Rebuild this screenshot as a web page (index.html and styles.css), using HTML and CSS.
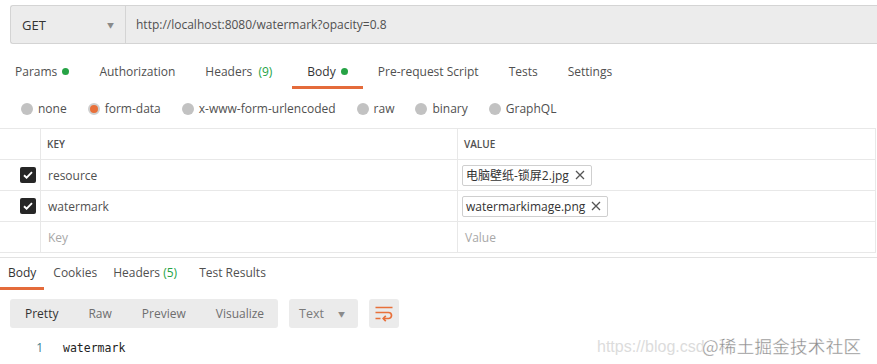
FILE: index.html
```html
<html>
<head>
	<title>Postman - watermark</title>
	<link rel="stylesheet" href="styles.css">
</head>
<body>
	<div class="url-bar">
		<div class="method">
			<span>GET</span>
			<span class="caret">&#9660;</span>
		</div>
		<div class="url">http://localhost:8080/watermark?opacity=0.8</div>
	</div>

	<div class="tabs req-tabs">
		<div class="tab">Params <span class="dot"></span></div>
		<div class="tab">Authorization</div>
		<div class="tab wide">Headers <span class="count">(9)</span></div>
		<div class="tab active">Body <span class="dot"></span></div>
		<div class="tab">Pre-request Script</div>
		<div class="tab">Tests</div>
		<div class="tab">Settings</div>
	</div>

	<div class="body-types">
		<label class="radio"><span class="circle"></span>none</label>
		<label class="radio"><span class="circle on"></span>form-data</label>
		<label class="radio"><span class="circle"></span>x-www-form-urlencoded</label>
		<label class="radio"><span class="circle"></span>raw</label>
		<label class="radio"><span class="circle"></span>binary</label>
		<label class="radio"><span class="circle"></span>GraphQL</label>
	</div>

	<div class="kv-table">
		<div class="kv-row head">
			<div class="cell check"></div>
			<div class="cell">KEY</div>
			<div class="cell">VALUE</div>
		</div>
		<div class="kv-row">
			<div class="cell check"><span class="box"><svg width="10" height="8" viewBox="0 0 10 8"><path d="M1 4.2l2.6 2.5L9 1.2" stroke="#fff" stroke-width="1.9" fill="none"/></svg></span></div>
			<div class="cell">resource</div>
			<div class="cell"><span class="file">电脑壁纸-锁屏2.jpg <svg class="x" width="10" height="10" viewBox="0 0 10 10"><path d="M1 1l8 8M9 1l-8 8" stroke="#555" stroke-width="1.3"/></svg></span></div>
		</div>
		<div class="kv-row">
			<div class="cell check"><span class="box"><svg width="10" height="8" viewBox="0 0 10 8"><path d="M1 4.2l2.6 2.5L9 1.2" stroke="#fff" stroke-width="1.9" fill="none"/></svg></span></div>
			<div class="cell">watermark</div>
			<div class="cell"><span class="file">watermarkimage.png <svg class="x" width="10" height="10" viewBox="0 0 10 10"><path d="M1 1l8 8M9 1l-8 8" stroke="#555" stroke-width="1.3"/></svg></span></div>
		</div>
		<div class="kv-row">
			<div class="cell check"></div>
			<div class="cell placeholder">Key</div>
			<div class="cell placeholder">Value</div>
		</div>
	</div>

	<div class="response">
		<div class="tabs res-tabs">
			<div class="tab active">Body</div>
			<div class="tab">Cookies</div>
			<div class="tab">Headers <span class="count">(5)</span></div>
			<div class="tab">Test Results</div>
		</div>

		<div class="toolbar">
			<div class="segment">
				<span class="seg-btn current">Pretty</span>
				<span class="seg-btn">Raw</span>
				<span class="seg-btn">Preview</span>
				<span class="seg-btn">Visualize</span>
			</div>
			<div class="format">Text <span class="caret">&#9660;</span></div>
			<div class="wrap-btn">
				<svg width="18" height="16" viewBox="0 0 18 16">
					<path d="M0.5 1.5h17M0.5 6.5h13a3 3 0 0 1 0 6H8.5M0.5 12.5h5" stroke="#e8703a" stroke-width="1.7" fill="none"/>
					<path d="M10.8 9.8l-2.6 2.7 2.6 2.7" stroke="#e8703a" stroke-width="1.7" fill="none"/>
				</svg>
			</div>
		</div>

		<div class="code">
			<span class="ln">1</span>
			<span class="src">watermark</span>
		</div>
	</div>

	<div class="stamp">
		<span class="stamp-url">https://blog.csd</span>
		<span class="stamp-name">@稀土掘金技术社区</span>
	</div>
</body>
</html>
```

FILE: styles.css
```css
body {
	margin: 0;
	background: #fff;
	font-family: "Open Sans", "Noto Sans CJK SC", sans-serif;
	font-size: 12px;
	color: #505050;
	position: relative;
	width: 877px;
	height: 364px;
	overflow: hidden;
}

.url-bar {
	display: flex;
	margin: 5px 0 0 10px;
	height: 37px;
	background: #ececec;
	border: 1px solid #d4d4d4;
	border-right: none;
	border-radius: 3px 0 0 3px;
	align-items: center;
}

.method {
	display: flex;
	justify-content: space-between;
	align-items: center;
	box-sizing: border-box;
	width: 115px;
	height: 100%;
	padding: 0 11px 0 11px;
	border-right: 1px solid #d4d4d4;
	font-size: 13px;
	color: #333;
}

.caret {
	font-size: 7px;
	color: #8a8a8a;
}

.url {
	padding-left: 10px;
	color: #505050;
}

.tabs {
	display: flex;
}

.req-tabs {
	margin-top: 12px;
}

.tab {
	padding: 8px 15px 6px;
	line-height: 16px;
	border-bottom: 3px solid transparent;
	white-space: nowrap;
}

.tab.wide {
	padding-right: 20px;
}

.tab.wide .count {
	margin-left: 3px;
}

.tab.active {
	color: #333;
	border-bottom-color: #e46b3b;
}

.dot {
	display: inline-block;
	width: 7px;
	height: 7px;
	border-radius: 50%;
	background: #26a345;
	margin-left: 2px;
	vertical-align: 1px;
}

.count {
	color: #26a345;
}

.body-types {
	display: flex;
	align-items: center;
	height: 39px;
	padding-left: 21px;
}

.radio {
	display: flex;
	align-items: center;
	margin-right: 21px;
}

.circle {
	width: 12px;
	height: 12px;
	border-radius: 50%;
	background: #c2c2c2;
	margin-right: 5px;
	box-sizing: border-box;
}

.circle.on {
	background: #e8703a;
	border: 2.5px solid #cfcfcf;
}

.kv-table {
	margin-right: 1px;
	border-top: 1px solid #e8e8e8;
	border-right: 1px solid #e8e8e8;
}

.kv-row {
	display: grid;
	grid-template-columns: 40px 417px 1fr;
	height: 30px;
	border-bottom: 1px solid #e8e8e8;
}

.cell {
	display: flex;
	align-items: center;
	padding-left: 7px;
	border-left: 1px solid #e8e8e8;
}

.cell.check {
	border-left: none;
	justify-content: flex-end;
	padding: 0 4px 0 0;
}

.head .cell {
	font-size: 10px;
	font-weight: 600;
	color: #505050;
	padding-left: 6px;
}

.head .cell.check {
	padding-left: 0;
}

.box {
	width: 16px;
	height: 16px;
	border-radius: 2px;
	background: #262626;
	display: flex;
	align-items: center;
	justify-content: center;
}

.file {
	display: inline-flex;
	align-items: center;
	height: 19px;
	padding: 0 6px 0 3px;
	border: 1px solid #cfcfcf;
	border-radius: 2px;
	color: #333;
	margin-left: -3px;
}

.x {
	margin-left: 6px;
}

.placeholder {
	color: #a8a8a8;
}

.response {
	margin-top: 4px;
	border-top: 1px solid #e2e2e2;
}

.res-tabs .tab {
	padding: 7px 8px 6px;
}

.res-tabs .tab:nth-child(2) {
	padding-left: 9px;
}

.res-tabs .tab:last-child {
	padding-left: 14px;
}

.toolbar {
	display: flex;
	margin: 9px 0 0 10px;
	height: 29px;
}

.segment {
	display: flex;
	align-items: center;
	background: #ebebeb;
	border-radius: 3px;
	padding: 0 0 0 15px;
	width: 253px;
}

.seg-btn {
	margin-right: 30px;
	color: #6e6e6e;
}

.seg-btn.current {
	color: #333;
}

.seg-btn:last-child {
	margin-right: 0;
}

.format {
	display: flex;
	align-items: center;
	justify-content: space-between;
	box-sizing: border-box;
	width: 69px;
	margin-left: 11px;
	padding: 0 13px 0 10px;
	background: #ebebeb;
	border-radius: 3px;
	color: #7a7a7a;
	font-size: 12.5px;
}

.wrap-btn {
	display: flex;
	align-items: center;
	justify-content: center;
	width: 30px;
	margin-left: 11px;
	background: #ebebeb;
	border-radius: 3px;
}

.code {
	display: flex;
	margin-top: 12px;
	line-height: 16px;
}

.ln {
	width: 43px;
	text-align: right;
	color: #3f7f8f;
	font-family: "Open Sans", sans-serif;
}

.src {
	margin-left: 20px;
	font-family: "DejaVu Sans Mono", monospace;
	font-size: 11.5px;
	color: #222;
}

.stamp {
	position: absolute;
	left: 597px;
	top: 333px;
	white-space: nowrap;
	height: 28px;
}

.stamp-url {
	position: absolute;
	left: 0;
	top: 5px;
	font-family: "Liberation Sans", sans-serif;
	font-size: 16px;
	color: #dcdcdc;
}

.stamp-name {
	position: absolute;
	left: 105px;
	top: 0;
	font-family: "Noto Sans CJK SC", sans-serif;
	font-size: 17.5px;
	color: #8c8c8c;
	-webkit-text-stroke: 0.3px #fff;
	text-shadow: 0 0 2px #fff, 0 0 2px #fff;
	letter-spacing: 0.3px;
}
```
